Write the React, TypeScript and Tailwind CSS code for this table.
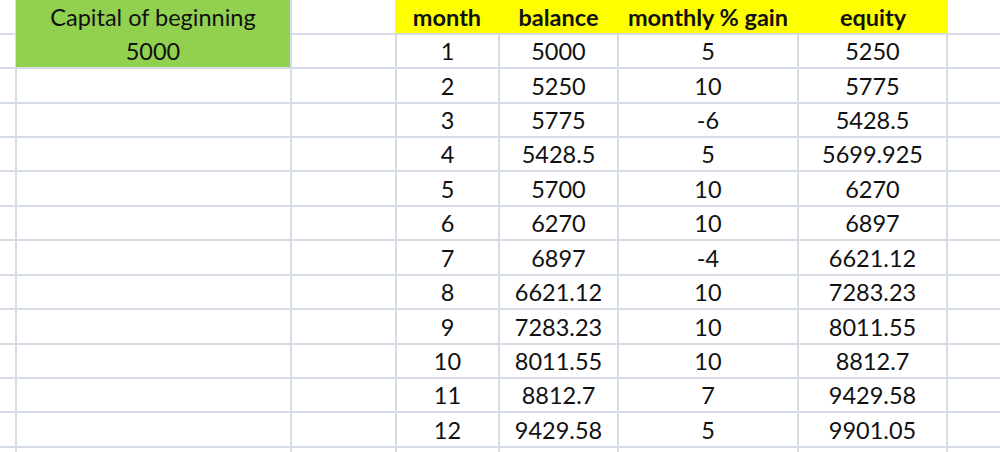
import React from "react";

type Row = [string, string, string, string];

const rows: Row[] = [
  ["1", "5000", "5", "5250"],
  ["2", "5250", "10", "5775"],
  ["3", "5775", "-6", "5428.5"],
  ["4", "5428.5", "5", "5699.925"],
  ["5", "5700", "10", "6270"],
  ["6", "6270", "10", "6897"],
  ["7", "6897", "-4", "6621.12"],
  ["8", "6621.12", "10", "7283.23"],
  ["9", "7283.23", "10", "8011.55"],
  ["10", "8011.55", "10", "8812.7"],
  ["11", "8812.7", "7", "9429.58"],
  ["12", "9429.58", "5", "9901.05"],
];

function Cell({ children }: { children?: React.ReactNode }) {
  return (
    <div className="flex items-end justify-center bg-white pb-[4px] leading-none">
      {children}
    </div>
  );
}

export default function App() {
  return (
    <div
      className="h-[452px] w-[1000px] overflow-hidden bg-white text-[23.5px] text-[#111]"
      style={{ fontFamily: "Lato, 'Open Sans', sans-serif" }}
    >
      <div className="grid h-[470px] grid-cols-[15px_273px_103px_101px_117px_178px_147px_1fr] grid-rows-[33px_32px_33px_32px_32px_33px_32px_33px_32px_33px_32px_32px_33px_20px] gap-[2px] bg-[#d5dbe7]">
        {/* header row */}
        <Cell />
        <div className="row-span-2 -ml-[1px] flex flex-col bg-[#92d050]">
          <div className="flex h-[33px] items-end justify-center pb-[4px] leading-none">
            Capital of beginning
          </div>
          <div className="h-[2px]" />
          <div className="flex h-[32px] items-end justify-center pb-[4px] leading-none">
            5000
          </div>
        </div>
        <Cell />
        <div className="col-span-4 -ml-[2px] -mr-[2px] grid grid-cols-[104px_119px_180px_150px] bg-[#ffff00] font-bold">
          <div className="flex items-end justify-center pb-[4px] leading-none">month</div>
          <div className="flex items-end justify-center pb-[4px] leading-none">balance</div>
          <div className="flex items-end justify-center pb-[4px] leading-none">monthly % gain</div>
          <div className="flex items-end justify-center pb-[4px] leading-none">equity</div>
        </div>
        <Cell />

        {rows.map((r, i) => (
          <React.Fragment key={i}>
            <Cell />
            {i > 0 && <Cell />}
            <Cell />
            <Cell>{r[0]}</Cell>
            <Cell>{r[1]}</Cell>
            <Cell>{r[2]}</Cell>
            <Cell>{r[3]}</Cell>
            <Cell />
          </React.Fragment>
        ))}

        {/* partial row at the bottom */}
        {Array.from({ length: 8 }).map((_, i) => (
          <Cell key={"b" + i} />
        ))}
      </div>
    </div>
  );
}
